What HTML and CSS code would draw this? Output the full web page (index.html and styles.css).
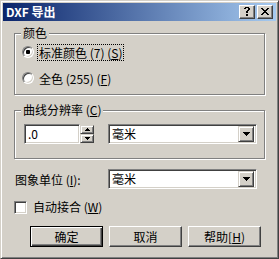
FILE: index.html
```
<!DOCTYPE html>
<html lang="zh-CN">
<head>
<meta charset="utf-8">
<title>DXF 导出</title>
<link rel="stylesheet" href="styles.css">
</head>
<body>
<div class="dialog">
  <div class="titlebar">
    <span class="title">DXF 导出</span>
    <div class="tbtns">
      <span class="tbtn"><svg width="7" height="9" viewBox="0 0 7 9"><path d="M1 0h4v1H1zM0 1h2v1H0zM4 1h2v2H4zM3 3h2v1H3zM2 4h2v2H2zM2 7h2v2H2z" fill="#000"/></svg></span>
      <span class="tbtn"><svg width="8" height="7" viewBox="0 0 8 7"><path d="M0 0h2v1H0zM6 0h2v1H6zM1 1h2v1H1zM5 1h2v1H5zM2 2h4v1H2zM3 3h2v1H3zM2 4h4v1H2zM1 5h2v1H1zM5 5h2v1H5zM0 6h2v1H0zM6 6h2v1H6z" fill="#000"/></svg></span>
    </div>
  </div>
  <div class="content">
    <div class="group g1">
      <span class="legend">颜色</span>
      <div class="opt"><span class="radio checked"></span><span class="optlabel focus">标准颜色 (7) (<u>S</u>)</span></div>
      <div class="opt"><span class="radio"></span><span class="optlabel">全色 (255) (<u>F</u>)</span></div>
    </div>
    <div class="group g2">
      <span class="legend">曲线分辨率 (<u>C</u>)</span>
      <div class="resrow">
        <div class="edit">.0</div>
        <div class="spin">
          <span class="spinbtn"><svg width="5" height="3" viewBox="0 0 5 3"><path d="M2 0h1v1H2zM1 1h3v1H1zM0 2h5v1H0z" fill="#000"/></svg></span>
          <span class="spinbtn"><svg width="5" height="3" viewBox="0 0 5 3"><path d="M0 0h5v1H0zM1 1h3v1H1zM2 2h1v1H2z" fill="#000"/></svg></span>
        </div>
        <div class="combo res-combo"><span class="ctext">毫米</span><span class="dd"><svg width="7" height="4" viewBox="0 0 7 4"><path d="M0 0h7v1H0zM1 1h5v1H1zM2 2h3v1H2zM3 3h1v1H3z" fill="#000"/></svg></span></div>
      </div>
    </div>
    <div class="unitrow">
      <span class="unitlabel">图象单位 (<u>I</u>):</span>
      <div class="combo"><span class="ctext">毫米</span><span class="dd"><svg width="7" height="4" viewBox="0 0 7 4"><path d="M0 0h7v1H0zM1 1h5v1H1zM2 2h3v1H2zM3 3h1v1H3z" fill="#000"/></svg></span></div>
    </div>
    <div class="checkrow">
      <span class="check"></span>
      <span>自动接合 (<u>W</u>)</span>
    </div>
    <div class="buttons">
      <span class="btn default">确定</span>
      <span class="btn">取消</span>
      <span class="btn">帮助[<u>H</u>)</span>
    </div>
  </div>
</div>
</body>
</html>
```
FILE: styles.css
```
html, body {
  margin: 0;
  padding: 0;
  background: #D4D0C8;
}
body {
  font-family: "Noto Sans CJK SC", "DejaVu Sans", sans-serif;
  font-size: 12px;
  color: #000;
}
.dialog {
  width: 279px;
  height: 259px;
  box-sizing: border-box;
  border: 1px solid;
  border-color: #D4D0C8 #404040 #404040 #D4D0C8;
  box-shadow: inset 1px 1px #fff, inset -1px -1px #808080;
  padding: 2px;
  display: flex;
  flex-direction: column;
}
.titlebar {
  height: 18px;
  flex: none;
  background: linear-gradient(to right, #0A246A, #A6CAF0);
  display: flex;
  align-items: center;
  justify-content: space-between;
  padding: 0 3px 0 3px;
  color: #fff;
  font-weight: bold;
  line-height: 18px;
}
.title {
  font-size: 12px;
  letter-spacing: 0;
}
.tbtns {
  display: flex;
  gap: 2px;
}
.tbtn {
  width: 16px;
  height: 14px;
  box-sizing: border-box;
  background: #D4D0C8;
  border: 1px solid;
  border-color: #fff #404040 #404040 #fff;
  box-shadow: inset -1px -1px #808080;
  display: flex;
  align-items: center;
  justify-content: center;
  padding-bottom: 1px;
}
.tbtn svg { display: block; }
.content {
  padding: 12px 11px 0 11px;
  display: flex;
  flex-direction: column;
}
.group {
  position: relative;
  border: 1px solid #808080;
  box-shadow: inset 1px 1px #fff, 1px 1px #fff;
  box-sizing: border-box;
}
.legend {
  position: absolute;
  top: -9px;
  left: 6px;
  padding: 0 2px;
  background: #D4D0C8;
  line-height: 16px;
}
.g1 {
  height: 62px;
  padding: 10px 0 0 7px;
  display: flex;
  flex-direction: column;
  gap: 10px;
}
.opt {
  display: flex;
  align-items: center;
  height: 16px;
}
.radio {
  width: 12px;
  height: 12px;
  box-sizing: border-box;
  border-radius: 50%;
  border: 1px solid;
  border-color: #808080 #fff #fff #808080;
  box-shadow: inset 1px 1px #404040, inset -1px -1px #D4D0C8;
  background: #fff;
  margin-right: 4px;
  display: flex;
  align-items: center;
  justify-content: center;
}
.radio.checked::after {
  content: "";
  width: 4px;
  height: 4px;
  border-radius: 1px;
  background: #000;
}
.optlabel {
  line-height: 15px;
  padding: 0 1px;
}
.focus {
  outline: 1px dotted #000;
}
.g2 {
  margin-top: 15px;
  height: 49px;
  padding: 13px 0 0 9px;
}
.resrow {
  display: flex;
  align-items: center;
}
.edit {
  width: 56px;
  height: 20px;
  box-sizing: border-box;
  background: #fff;
  border: 1px solid;
  border-color: #808080 #fff #fff #808080;
  box-shadow: inset 1px 1px #404040, inset -1px -1px #D4D0C8;
  padding-left: 3px;
  line-height: 18px;
}
.spin {
  width: 14px;
  height: 18px;
  display: flex;
  flex-direction: column;
}
.spinbtn {
  flex: 1;
  box-sizing: border-box;
  border: 1px solid;
  border-color: #D4D0C8 #404040 #404040 #D4D0C8;
  box-shadow: inset 1px 1px #fff, inset -1px -1px #808080;
  display: flex;
  align-items: center;
  justify-content: center;
}
.spinbtn svg { display: block; }
.combo {
  width: 149px;
  height: 20px;
  box-sizing: border-box;
  background: #fff;
  border: 1px solid;
  border-color: #808080 #fff #fff #808080;
  box-shadow: inset 1px 1px #404040, inset -1px -1px #D4D0C8;
  padding: 2px 2px 2px 3px;
  display: flex;
  align-items: center;
  justify-content: space-between;
}
.res-combo {
  margin-left: 14px;
}
.ctext {
  line-height: 16px;
}
.dd {
  width: 16px;
  height: 16px;
  box-sizing: border-box;
  background: #D4D0C8;
  border: 1px solid;
  border-color: #D4D0C8 #404040 #404040 #D4D0C8;
  box-shadow: inset 1px 1px #fff, inset -1px -1px #808080;
  display: flex;
  align-items: center;
  justify-content: center;
}
.dd svg { display: block; }
.unitrow {
  margin-top: 10px;
  display: flex;
  align-items: center;
}
.unitlabel {
  width: 94px;
  padding-left: 1px;
  box-sizing: border-box;
}
.checkrow {
  margin-top: 11px;
  display: flex;
  align-items: center;
  gap: 6px;
  line-height: 14px;
}
.check {
  width: 13px;
  height: 13px;
  box-sizing: border-box;
  background: #fff;
  border: 1px solid;
  border-color: #808080 #fff #fff #808080;
  box-shadow: inset 1px 1px #404040, inset -1px -1px #D4D0C8;
}
.buttons {
  margin-top: 12px;
  padding-left: 16px;
  display: flex;
  gap: 6px;
}
.btn {
  width: 73px;
  height: 21px;
  box-sizing: border-box;
  border: 1px solid;
  border-color: #fff #404040 #404040 #fff;
  box-shadow: inset -1px -1px #808080;
  display: flex;
  align-items: center;
  justify-content: center;
  line-height: 16px;
}
.btn.default {
  border: 1px solid #000;
  box-shadow: inset 1px 1px #fff, inset -1px -1px #404040, inset -2px -2px #808080;
}
```
